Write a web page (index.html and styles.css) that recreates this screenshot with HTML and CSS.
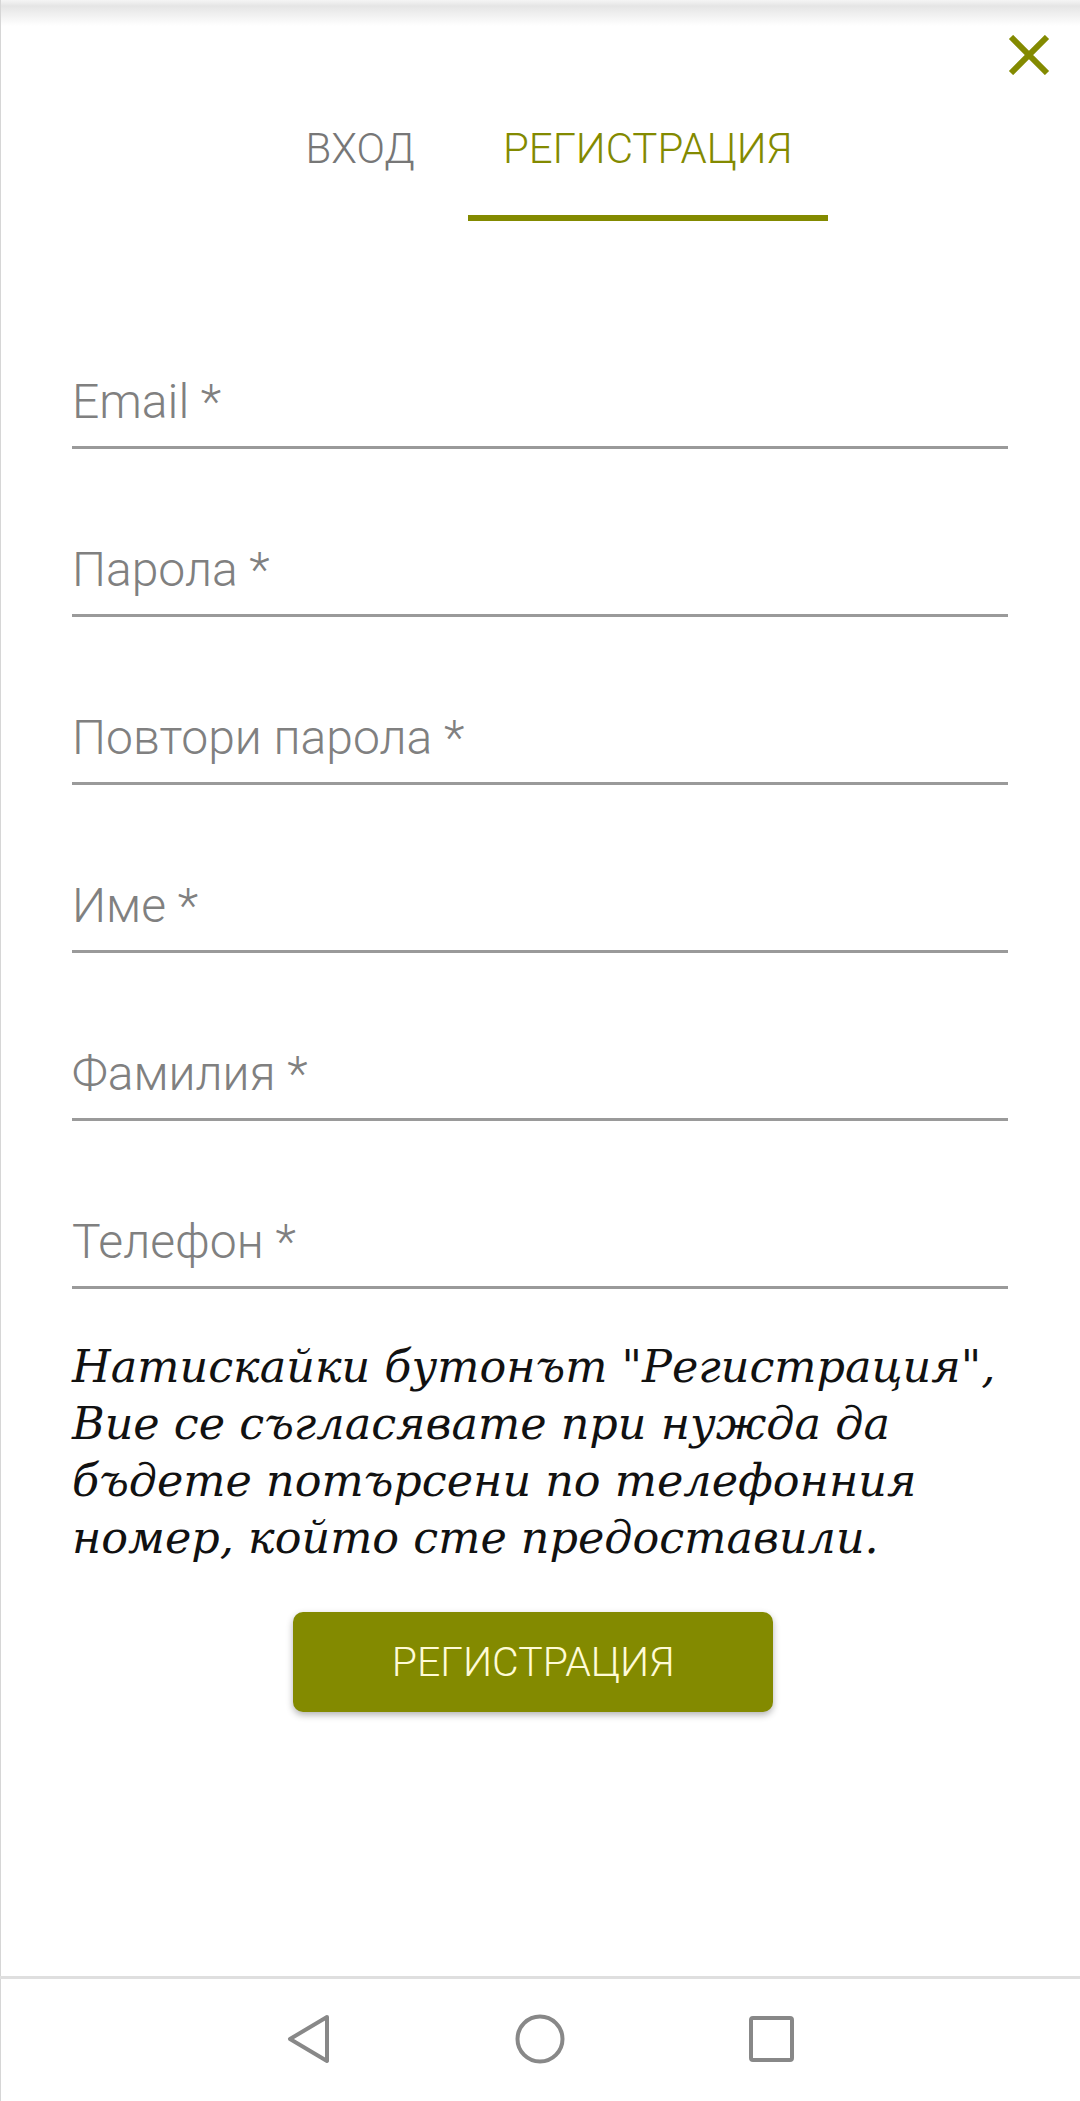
FILE: index.html
```html
<!DOCTYPE html>
<html lang="bg">
<head>
<meta charset="utf-8">
<title>Регистрация</title>
<link rel="stylesheet" href="styles.css">
</head>
<body>
<div class="page">
  <div class="header">
    <button class="close" aria-label="Затвори">
      <svg width="42" height="40" viewBox="0 0 42 40"><path d="M3 2 L39 38 M39 2 L3 38" stroke="#838a00" stroke-width="6" fill="none"/></svg>
    </button>
  </div>
  <div class="tabs">
    <div class="tab">ВХОД</div>
    <div class="tab active">РЕГИСТРАЦИЯ</div>
  </div>
  <form class="form">
    <div class="field"><span class="label">Email *</span></div>
    <div class="field"><span class="label">Парола *</span></div>
    <div class="field"><span class="label">Повтори парола *</span></div>
    <div class="field"><span class="label">Име *</span></div>
    <div class="field"><span class="label">Фамилия *</span></div>
    <div class="field"><span class="label">Телефон *</span></div>
    <p class="notice">Натискайки бутонът "Регистрация",<br>Вие се съгласявате при нужда да<br>бъдете потърсени по телефонния<br>номер, който сте предоставили.</p>
    <div class="actions">
      <button type="button" class="submit">РЕГИСТРАЦИЯ</button>
    </div>
  </form>
  <div class="navbar">
    <svg width="50" height="50" viewBox="0 0 50 50"><path d="M44 3 L7 25 L44 47 Z" stroke="#888" stroke-width="4" fill="none" stroke-linejoin="round"/></svg>
    <svg width="50" height="50" viewBox="0 0 50 50"><circle cx="25" cy="25" r="22.5" stroke="#888" stroke-width="4" fill="none"/></svg>
    <svg width="50" height="50" viewBox="0 0 50 50"><rect x="4" y="4" width="41" height="42" rx="2" stroke="#888" stroke-width="4" fill="none"/></svg>
  </div>
</div>
</body>
</html>
```
FILE: styles.css
```css
* { box-sizing: border-box; }
html, body { margin: 0; padding: 0; background: #fff; }
body { font-family: Roboto, "Noto Sans", sans-serif; }

.page {
  width: 1080px;
  min-height: 2101px;
  display: flex;
  flex-direction: column;
  background: linear-gradient(to bottom, #f5f5f5 0, #e5e5e5 6px, #ffffff 26px) no-repeat;
  background-size: 100% 26px;
  box-shadow: inset 1px 0 #d6d6d6;
}

.header {
  display: flex;
  justify-content: flex-end;
  padding: 35px 30px 0 0;
}
.close {
  border: 0;
  background: none;
  padding: 0;
  width: 42px;
  height: 40px;
  display: block;
}
.close svg { display: block; }

.tabs {
  display: flex;
  justify-content: center;
  padding-left: 53px;
  margin-top: 49px;
}
.tab {
  font-size: 42px;
  font-weight: 300;
  line-height: 50px;
  color: #777;
  padding: 0 53px 41px 0;
  border-bottom: 6px solid transparent;
}
.tab.active {
  color: #838a00;
  width: 360px;
  text-align: center;
  border-bottom-color: #838a00;
  padding: 0 0 41px 0;
}

.form {
  padding: 0 72px;
  display: flex;
  flex-direction: column;
}
.field {
  margin-top: 94px;
  padding-bottom: 17px;
  border-bottom: 3px solid #9a9a9a;
}
.field:first-child { margin-top: 154px; }
.label {
  display: block;
  font-size: 48px;
  font-weight: 300;
  line-height: 54px;
  color: #808080;
}

.notice {
  margin: 49px 0 0;
  font-family: "DejaVu Serif", "Liberation Serif", serif;
  font-style: italic;
  font-size: 44.5px;
  line-height: 57px;
  color: #111;
  white-space: nowrap;
}

.actions {
  display: flex;
  justify-content: center;
  padding-right: 14px;
  margin-top: 46px;
}
.submit {
  width: 480px;
  height: 100px;
  border: 0;
  border-radius: 10px;
  background: #838a00;
  color: #fffbd6;
  font-family: Roboto, "Noto Sans", sans-serif;
  font-size: 41px;
  font-weight: 300;
  box-shadow: 0 3px 7px rgba(0, 0, 0, 0.3);
}

.navbar {
  margin-top: auto;
  height: 125px;
  border-top: 3px solid #dfdfdf;
  display: flex;
  justify-content: center;
  align-items: center;
  gap: 182px;
  padding-bottom: 2px;
}
.navbar svg { display: block; }
```
